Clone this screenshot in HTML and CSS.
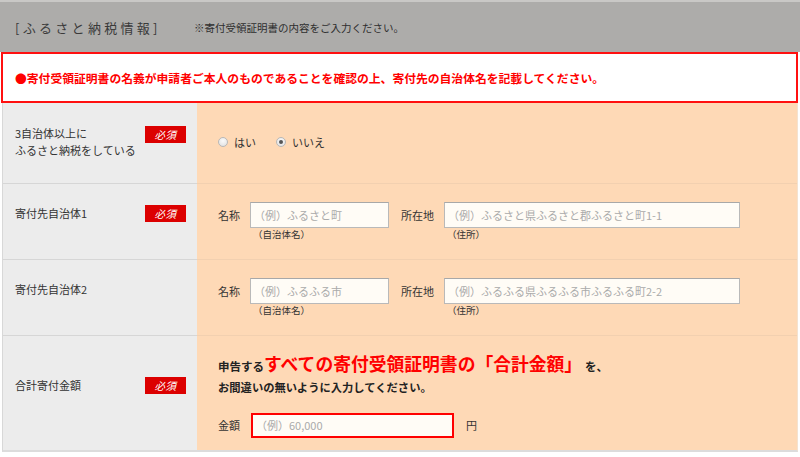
FILE: index.html
```html
<!DOCTYPE html>
<html lang="ja">
<head>
<meta charset="utf-8">
<title>ふるさと納税情報</title>
<link rel="stylesheet" href="styles.css">
</head>
<body>
<div class="page">
  <div class="header">
    <span class="header-title">[ふるさと納税情報]</span>
    <span class="header-note">※寄付受領証明書の内容をご入力ください。</span>
  </div>
  <div class="notice">●寄付受領証明書の名義が申請者ご本人のものであることを確認の上、寄付先の自治体名を記載してください。</div>
  <div class="form">
    <div class="row row-1">
      <div class="label-cell lc-1">
        <div class="label-inner">
          <div class="label-text">3自治体以上に<br>ふるさと納税をしている</div>
          <span class="badge">必須</span>
        </div>
      </div>
      <div class="value-cell vc-1">
        <label class="radio"><span class="radio-dot"></span><span>はい</span></label>
        <label class="radio"><span class="radio-dot checked"></span><span>いいえ</span></label>
      </div>
    </div>
    <div class="row row-2">
      <div class="label-cell lc-mid">
        <div class="label-inner">
          <div class="label-text">寄付先自治体1</div>
          <span class="badge">必須</span>
        </div>
      </div>
      <div class="value-cell vc-fields">
        <div class="field">
          <span class="field-label">名称</span>
          <div class="field-col">
            <input class="input input-name" type="text" placeholder="（例）ふるさと町">
            <span class="field-note">（自治体名）</span>
          </div>
        </div>
        <div class="field">
          <span class="field-label">所在地</span>
          <div class="field-col">
            <input class="input input-addr" type="text" placeholder="（例）ふるさと県ふるさと郡ふるさと町1-1">
            <span class="field-note">（住所）</span>
          </div>
        </div>
      </div>
    </div>
    <div class="row row-3">
      <div class="label-cell lc-mid">
        <div class="label-inner">
          <div class="label-text">寄付先自治体2</div>
        </div>
      </div>
      <div class="value-cell vc-fields">
        <div class="field">
          <span class="field-label">名称</span>
          <div class="field-col">
            <input class="input input-name" type="text" placeholder="（例）ふるふる市">
            <span class="field-note">（自治体名）</span>
          </div>
        </div>
        <div class="field">
          <span class="field-label">所在地</span>
          <div class="field-col">
            <input class="input input-addr" type="text" placeholder="（例）ふるふる県ふるふる市ふるふる町2-2">
            <span class="field-note">（住所）</span>
          </div>
        </div>
      </div>
    </div>
    <div class="row row-4">
      <div class="label-cell lc-mid">
        <div class="label-inner">
          <div class="label-text">合計寄付金額</div>
          <span class="badge">必須</span>
        </div>
      </div>
      <div class="value-cell vc-total">
        <p class="total-lead">申告する<span class="total-em">すべての寄付受領証明書の「合計金額」</span>を、</p>
        <p class="total-sub">お間違いの無いように入力してください。</p>
        <div class="amount">
          <span class="field-label">金額</span>
          <input class="input input-amount" type="text" placeholder="（例）60,000">
          <span class="yen">円</span>
        </div>
      </div>
    </div>
  </div>
</div>
</body>
</html>
```
FILE: styles.css
```css
* { box-sizing: border-box; }
html, body { margin: 0; padding: 0; background: #fff; }
body {
  font-family: "Noto Sans CJK JP", "Noto Sans", sans-serif;
  color: #333;
  width: 800px;
}
.page { width: 800px; }

.header {
  height: 52px;
  background: #adacaa;
  border-top: 2px solid #c9c8c6;
  display: flex;
  align-items: center;
  padding-left: 15px;
}
.header-title {
  font-size: 13px;
  letter-spacing: 3.3px;
  color: #3a3a3a;
  width: 179px;
}
.header-note {
  font-size: 10.5px;
  color: #2e2e2e;
}

.notice {
  height: 51px;
  margin: 0 2px 0 1px;
  border: 2px solid #ff1010;
  background: #fff;
  display: flex;
  align-items: center;
  padding-left: 12px;
  padding-bottom: 1px;
  color: #f00;
  font-weight: bold;
  font-size: 11.8px;
}

.form {
  margin-left: 2px;
  width: 796px;
  border-left: 1px solid #d8d8d8;
  border-right: 1px solid #f3e2d0;
  border-bottom: 2px solid #dcdcdc;
}
.row {
  display: grid;
  grid-template-columns: 194px 1fr;
}
.row-1 { height: 80px; }
.row-2, .row-3 { height: 76px; }
.row-4 { height: 115px; }

.label-cell {
  background: #ececec;
  display: flex;
  align-items: center;
  padding: 0 11px 0 12px;
}
.label-inner {
  flex: 1;
  display: flex;
  align-items: flex-start;
  justify-content: space-between;
}
.lc-1 { padding-bottom: 3px; }
.lc-1 .badge { margin-top: 1px; }
.lc-mid { padding-bottom: 16px; }

.row-2 .label-cell, .row-3 .label-cell, .row-4 .label-cell { border-top: 1px solid #d6d6d6; }
.row-2 .value-cell, .row-3 .value-cell, .row-4 .value-cell { border-top: 1px solid #f2d0b0; }

.label-text {
  font-size: 11px;
  line-height: 17px;
  color: #333;
}
.badge {
  width: 41px;
  height: 17px;
  background: #dc0000;
  color: #fff;
  font-size: 10.5px;
  line-height: 17px;
  text-align: center;
  letter-spacing: 0.5px;
  font-style: italic;
}

.value-cell {
  background: #fed9b6;
  padding-left: 21px;
}

.vc-1 {
  display: flex;
  align-items: center;
  gap: 20px;
  padding-bottom: 2px;
}
.radio {
  display: flex;
  align-items: center;
  gap: 6px;
  font-size: 11px;
  color: #333;
}
.radio-dot {
  width: 10px;
  height: 10px;
  border-radius: 50%;
  border: 1px solid #b8b8b8;
  background: radial-gradient(circle at 50% 35%, #fafafa 0%, #dedede 100%);
  display: flex;
  align-items: center;
  justify-content: center;
}
.radio-dot.checked::after {
  content: "";
  width: 4px;
  height: 4px;
  border-radius: 50%;
  background: #555;
}

.vc-fields {
  display: flex;
  align-items: flex-start;
  gap: 12px;
  padding-top: 18px;
}
.field {
  display: flex;
  align-items: flex-start;
  gap: 10px;
}
.field-label {
  font-size: 11px;
  line-height: 26px;
  color: #333;
}
.field-col {
  display: flex;
  flex-direction: column;
}
.field-note {
  font-size: 9.5px;
  line-height: 12px;
  padding-left: 3px;
  color: #333;
}
.input {
  height: 26px;
  border: 1px solid #b9b9b9;
  border-top-color: #a8a8a8;
  background: #fffcf6;
  font-family: "Noto Sans CJK JP", "Noto Sans", sans-serif;
  font-size: 11px;
  padding: 0 0 0 3px;
  margin: 0;
  outline: none;
  color: #333;
}
.input::placeholder { color: #aaa; }
.input-name { width: 139px; }
.input-addr { width: 296px; }

.vc-total {
  padding-top: 16px;
}
.total-lead {
  margin: 0;
  font-size: 11.5px;
  font-weight: bold;
  line-height: 22px;
  color: #222;
}
.total-em {
  font-size: 17.8px;
  color: #f00;
  margin-right: 3px;
}
.total-sub {
  margin: 0;
  font-size: 11.3px;
  font-weight: bold;
  line-height: 20px;
  color: #222;
}
.amount {
  display: flex;
  align-items: center;
  margin-top: 15px;
}
.amount .field-label { width: 33px; }
.input-amount {
  width: 203px;
  height: 25px;
  border: 2px solid #f00;
}
.yen {
  font-size: 11px;
  margin-left: 12px;
  color: #333;
}
```
